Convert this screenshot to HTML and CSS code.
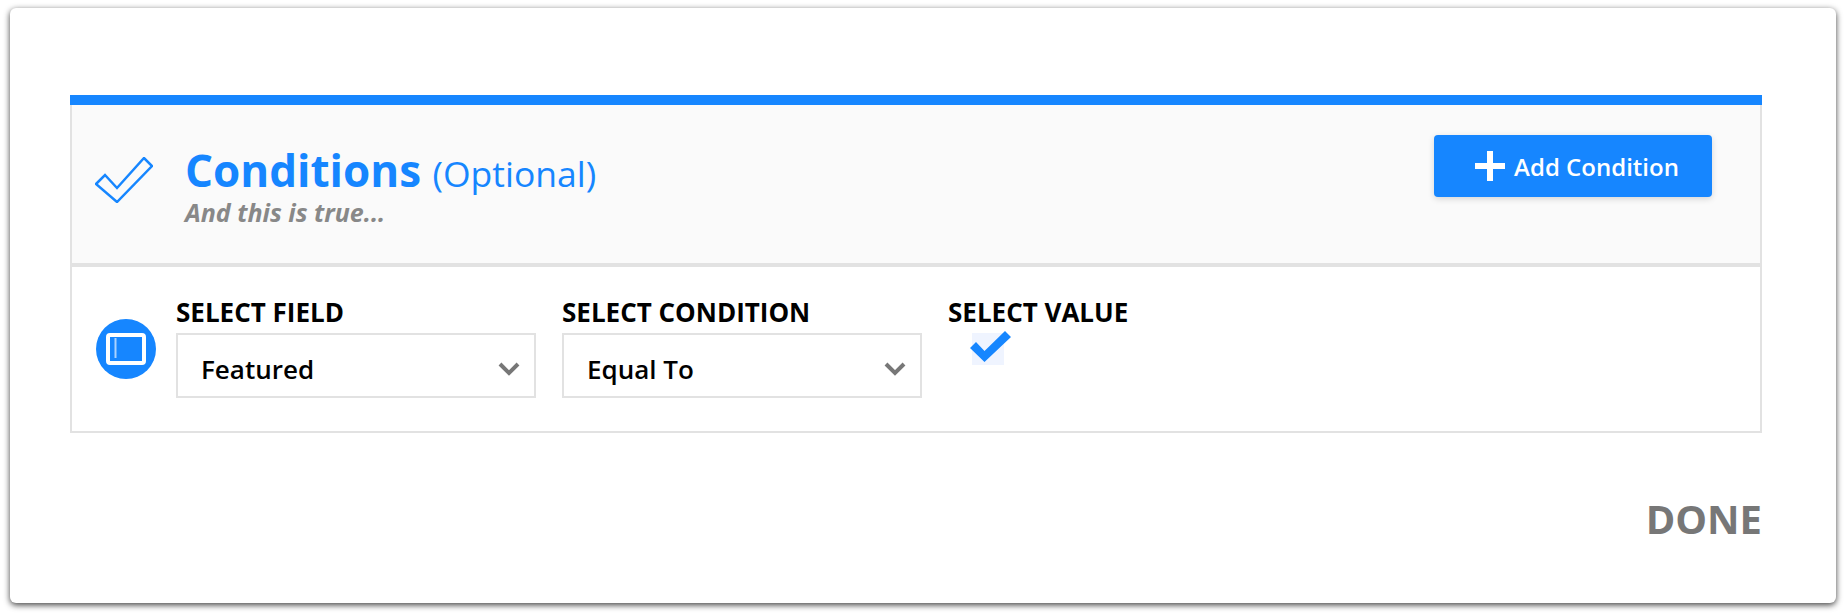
FILE: index.html
```html
<!DOCTYPE html>
<html lang="en">
<head>
  <meta charset="UTF-8" />
  <title>Conditions</title>
  <link rel="stylesheet" href="styles.css">
</head>
<body>
  <div class="modal">
    <div class="card">
      <div class="card-head">
        <svg class="head-icon" width="58" height="46" viewBox="0 0 58 46">
          <path d="M1 27 L10 18 L22 31 L49 1 L57 9 L22 45 Z" fill="none" stroke="#1686ff" stroke-width="2.5"/>
        </svg>
        <div class="head-text">
          <h1>Conditions <span>(Optional)</span></h1>
          <p>And this is true...</p>
        </div>
        <button class="add-btn">
          <svg width="30" height="30" viewBox="0 0 30 30"><path d="M12 0h6v12H30v6H18V30h-6V18H0v-6h12z" fill="#fff"/></svg>
          Add Condition
        </button>
      </div>
      <div class="card-row">
        <div class="field-icon">
          <svg width="40" height="32" viewBox="0 0 40 32">
            <rect x="2" y="2" width="36" height="28" rx="2" fill="none" stroke="#fff" stroke-width="4"/>
            <rect x="8.500" y="5" width="2" height="20" fill="#a9d2ff"/>
          </svg>
        </div>
        <div class="field">
          <label>SELECT FIELD</label>
          <div class="select">
            Featured
            <svg width="22" height="14" viewBox="0 0 22 14"><path d="M2 2 L11 11 L20 2" fill="none" stroke="#777" stroke-width="4"/></svg>
          </div>
        </div>
        <div class="field">
          <label>SELECT CONDITION</label>
          <div class="select">
            Equal To
            <svg width="22" height="14" viewBox="0 0 22 14"><path d="M2 2 L11 11 L20 2" fill="none" stroke="#777" stroke-width="4"/></svg>
          </div>
        </div>
        <div class="field">
          <label>SELECT VALUE</label>
          <div class="check">
            <svg width="41" height="31" viewBox="0 0 41 31"><path d="M0 17 L6 11 L14.500 20 L35 0 L41 6 L14.500 31 Z" fill="#1686ff"/></svg>
          </div>
        </div>
      </div>
    </div>
    <div class="modal-foot">
      <a class="done">DONE</a>
    </div>
  </div>
</body>
</html>
```

FILE: styles.css
```css
:root {
  --blue: #1686ff;
  --line: #e2e2e2;
  --grey: #777;
}

* { box-sizing: border-box; }

body {
  font-family: 'Open Sans', sans-serif;
  margin: 0;
  min-height: 100vh;
  padding: 8px 10px 0;
  background: #fff;
  color: #000;
}

.modal {
  height: 595px;
  padding: 87px 74px 0 60px;
  background: #fff;
  border-radius: 6px;
  box-shadow: 0 2px 6px rgba(0, 0, 0, 0.75);
}

.card {
  border-top: 10px solid var(--blue);
}

.card-head {
  display: flex;
  height: 162px;
  padding: 30px 48px 0 23px;
  background: #fafafa;
  border: 2px solid var(--line);
  border-top: none;
  border-bottom-width: 4px;
}

.head-icon {
  margin: 22px 32px 0 0;
}

.head-text {
  margin-top: 10px;
}

.head-text h1 {
  margin: 0;
  font-size: 44px;
  line-height: 50px;
  font-weight: 700;
  color: var(--blue);
}

.head-text h1 span {
  font-size: 35.500px;
  font-weight: 400;
}

.head-text p {
  margin: 0;
  font-size: 25px;
  line-height: 28px;
  font-weight: 700;
  font-style: italic;
  color: #888;
}

.add-btn {
  display: flex;
  align-items: center;
  justify-content: center;
  gap: 9px;
  width: 278px;
  height: 62px;
  margin-left: auto;
  padding: 0 0 0 8px;
  background: var(--blue);
  border: none;
  border-radius: 4px;
  box-shadow: 0 2px 6px rgba(0, 0, 0, 0.15);
  color: #fff;
  font-family: inherit;
  font-size: 24px;
  font-weight: 600;
}

.card-row {
  display: flex;
  height: 166px;
  padding: 28px 0 0 24px;
  border: 2px solid var(--line);
  border-top: none;
  gap: 26px;
}

.field-icon {
  display: flex;
  align-items: center;
  justify-content: center;
  width: 60px;
  height: 60px;
  margin: 24px -6px 0 0;
  background: var(--blue);
  border-radius: 50%;
}

.field {
  width: 360px;
}

.field label {
  display: block;
  height: 38px;
  font-size: 26px;
  line-height: 34px;
  font-weight: 700;
}

.select {
  display: flex;
  align-items: center;
  justify-content: space-between;
  height: 65px;
  padding: 7px 14px 0 23px;
  border: 2px solid var(--line);
  font-size: 26px;
  font-weight: 600;
}

.check {
  position: relative;
  width: 32px;
  height: 32px;
  margin-left: 24px;
  background: #eff4ff;
}

.check svg {
  position: absolute;
  left: -2px;
  top: -2px;
}

.modal-foot {
  display: flex;
  justify-content: flex-end;
  padding: 60px 0 0;
}

.done {
  font-size: 40px;
  line-height: 52px;
  font-weight: 700;
  color: var(--grey);
}
```
